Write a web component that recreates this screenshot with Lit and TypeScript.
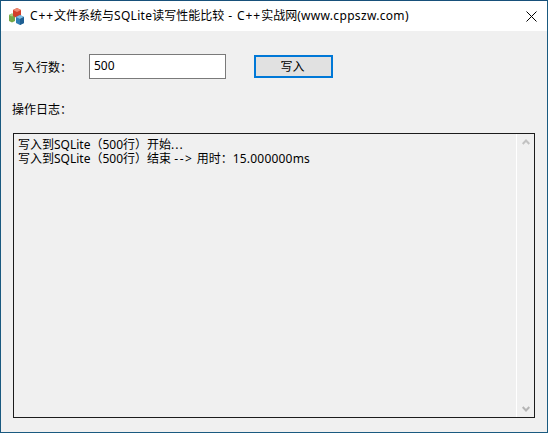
import { LitElement, html, css } from "lit";
import { customElement } from "lit/decorators.js";

@customElement("app-root")
export class AppRoot extends LitElement {
  static styles = css`
    :host {
      display: block;
      width: 548px;
      height: 433px;
      box-sizing: border-box;
      border: 1px solid #1a5a80;
      border-top-color: #17507a;
      background: #f0f0f0;
      font-family: "Noto Sans", "Noto Sans CJK SC", sans-serif;
      font-size: 12px;
      color: #000;
      overflow: hidden;
      text-spacing-trim: space-all;
    }
    .title {
      height: 30px;
      background: #fff;
      display: flex;
      align-items: center;
      padding-left: 7px;
      gap: 5px;
      font-size: 12px;
      line-height: 16px;
    }
    .title .t { flex: 1; white-space: nowrap; }
    .w { letter-spacing: 0.9px; }
    .s { letter-spacing: 0.3px; }
    .u { letter-spacing: 0.32px; }
    .d { letter-spacing: 1.6px; }
    .n { letter-spacing: 0.2px; }
    .dots { letter-spacing: 1px; }
    .close { width: 32px; height: 30px; display: flex; align-items: center; justify-content: center; }
    .body { padding: 23px 13px 0 11px; }
    .row { display: flex; align-items: center; height: 25px; }
    .lbl { width: 77px; line-height: 16px; padding-top: 2px; }
    input {
      width: 137px; height: 25px; box-sizing: border-box;
      border: 1px solid #7a7a7a; background: #fff;
      padding: 0 4px 3px; margin: 0; font: inherit; color: #000; outline: none;
    }
    button {
      width: 79px; height: 23px; margin-left: 28px; box-sizing: border-box;
      border: 2px solid #0078d7; background: #e1e1e1; padding: 0 2px 2px 0;
      font: inherit; color: #000;
    }
    .loglbl { margin-top: 23px; line-height: 16px; }
    .log {
      margin: 15px 0 0 1px;
      height: 285px; width: 522px; box-sizing: border-box;
      border: 1px solid #1c1c1c;
      display: flex;
    }
    .text { flex: 1; padding: 4px 4px 0 4px; line-height: 14px; white-space: pre; }
    .sb {
      width: 17px; border-left: 1px solid #fff;
      display: flex; flex-direction: column; justify-content: space-between; align-items: center;
      padding: 5px 0;
    }
    svg { display: block; }
  `;

  render() {
    return html`
      <div class="title">
        <svg width="17" height="17" viewBox="0 0 17 17">
          <path d="M1 7l3-1.500 3 1.500v6l-3 1.500-3-1.500z" fill="#74a846"/>
          <path d="M1 7l3-1.500 3 1.500-3 1.500z" fill="#a8cf80"/>
          <path d="M5 2l4-2 4 2v6l-4 2-4-2z" fill="#d2402a"/>
          <path d="M5 2l4-2 4 2-4 2z" fill="#ee8a72"/>
          <path d="M8 9l4-2 4 2v6l-4 2-4-2z" fill="#2f7db5"/>
          <path d="M8 9l4-2 4 2-4 2z" fill="#86bfe2"/>
          <path d="M12 11l4-2v6l-4 2z" fill="#1f5f92"/>
        </svg>
        <span class="t"><span class="w">C++</span>文件系统与<span class="s">SQLite</span>读写性能比较<span class="w"> - C++</span>实战网<span class="u">(www.cppszw.com)</span></span>
        <div class="close">
          <svg width="11" height="11" viewBox="0 0 11 11"><path d="M.5.5l10 10M10.500.5l-10 10" stroke="#000" fill="none"/></svg>
        </div>
      </div>
      <div class="body">
        <div class="row">
          <div class="lbl">写入行数：</div>
          <input value="500" />
          <button>写入</button>
        </div>
        <div class="loglbl">操作日志：</div>
        <div class="log">
          <div class="text">写入到SQLite（500行）开始<span class="dots">...</span>
写入到SQLite（500行）结束 <span class="d">--></span> 用时：<span class="n">15.000000ms</span></div>
          <div class="sb">
            <svg width="8" height="6" viewBox="0 0 8 6"><path d="M.7 5L4 1.500 7.300 5" stroke="#c2c2c2" stroke-width="2" fill="none"/></svg>
            <svg width="8" height="6" viewBox="0 0 8 6"><path d="M.7 1L4 4.500 7.300 1" stroke="#b5b5b5" stroke-width="2" fill="none"/></svg>
          </div>
        </div>
      </div>
    `;
  }
}
